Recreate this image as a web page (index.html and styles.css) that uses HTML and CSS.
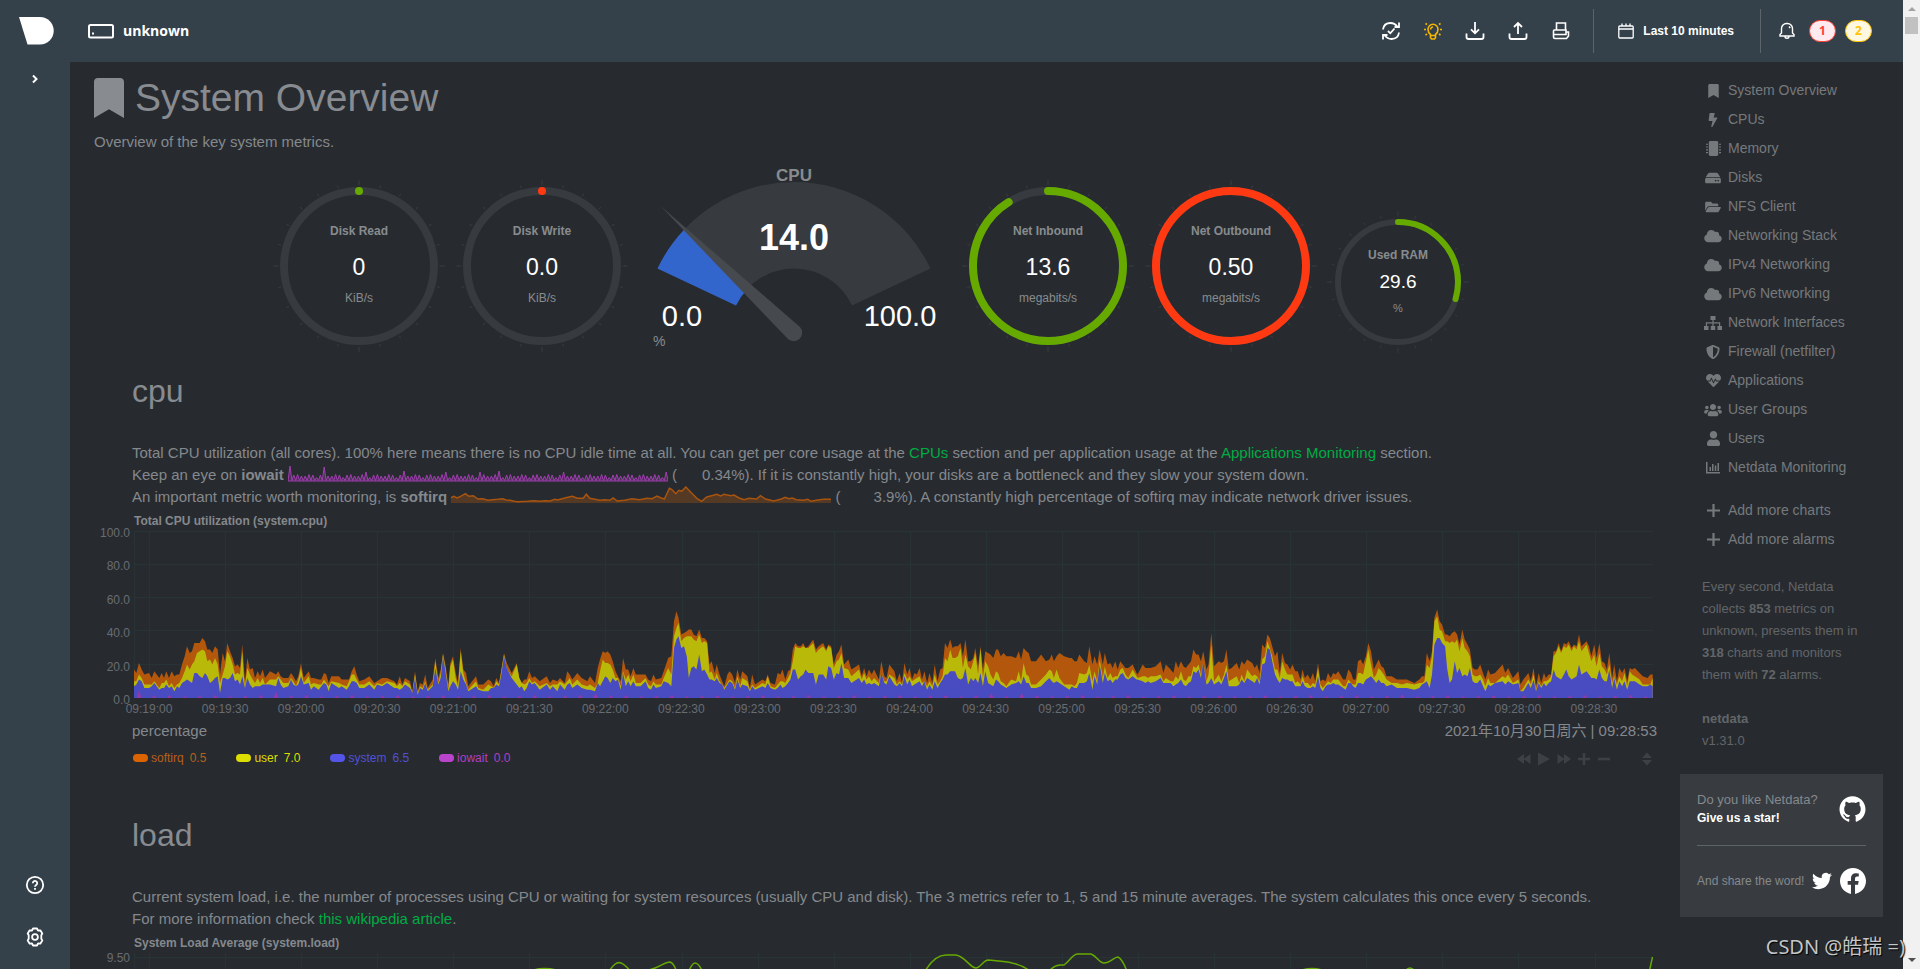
FILE: index.html
```html
<!DOCTYPE html>
<html lang="en">
<head>
<meta charset="utf-8">
<title>unknown netdata dashboard</title>
<link rel="stylesheet" href="styles.css">
</head>
<body>
<div class="app">
  <aside class="rail">
    <a class="logo" href="#" aria-label="Netdata"><svg width="35" height="28" viewBox="0 0 35 28"><path d="M0 0H21a13.500 13.500 0 0 1 0 27.500H8.500Z" fill="#fff"/></svg></a>
    <button class="icon-btn expand" aria-label="Expand"><svg width="8" height="10" viewBox="0 0 8 10" fill="none" stroke="#fff" stroke-width="2"><path d="M2 1.500 5.500 5 2 8.500"/></svg></button>
    <div class="rail-bottom">
      <button class="icon-btn" aria-label="Help"><svg width="20" height="20" viewBox="0 0 20 20" fill="none" stroke="#fff" stroke-width="1.800"><circle cx="10" cy="10" r="8.200"/><path d="M7.800 8.200a2.200 2.200 0 1 1 3.400 1.800c-.8.500-1.200.9-1.200 1.800" /><path d="M10 13v1.800"/></svg></button>
      <button class="icon-btn" aria-label="Settings"><svg width="20" height="20" viewBox="0 0 20 20" fill="none" stroke="#fff" stroke-width="1.800" stroke-linejoin="round"><path d="M8 1.500h4l1 2 2.300-.2 2 3.200-1 1.800v3.400l1 1.800-2 3.200-2.300-.2-1 2H8l-1-2-2.300.2-2-3.200 1-1.800V8.300l-1-1.800 2-3.200 2.300.2Z"/><circle cx="10" cy="10" r="2.900"/></svg></button>
    </div>
  </aside>

  <div class="page">
    <header class="topbar">
      <div class="host">
        <svg width="26" height="15" viewBox="0 0 26 15" fill="none" stroke="#fff" stroke-width="2"><rect x="1" y="1" width="24" height="12.500" rx="1.500"/><path d="M4 9.500h2"/></svg>
        <span>unknown</span>
      </div>
      <div class="tools">
        <button class="icon-btn" aria-label="Update"><svg width="20" height="20" viewBox="0 0 20 20" fill="none" stroke="#fff" stroke-width="1.800"><path d="M2 8.500C2.500 4.500 5.500 2 9.500 2c3 0 5 1.200 7 3.700M18 1.500V6h-4.500M18 11.500C17.500 15.500 14.500 18 10.500 18c-3 0-5-1.200-7-3.700M2 18.500V14h4.500M7 10l2.300 2.300L13.500 7.500"/></svg></button>
        <button class="icon-btn" aria-label="News"><svg width="18" height="20" viewBox="0 0 18 20" fill="none" stroke="#f5b800" stroke-width="1.600"><path d="M6.500 13.500C4.800 12.200 4 10.500 4 8.300a5 5 0 0 1 10 0c0 2.200-.8 3.900-2.500 5.200v3.300l-1 1.200h-3l-1-1.200ZM6.500 14.500h5M6.700 8.500A2.300 2.300 0 0 1 9 6M1.500 2.500l1.500 1M16.500 2.500l-1.500 1M0 8.500h2M16 8.500h2M1.500 14l1.500-1M16.500 14l-1.500-1"/></svg></button>
        <button class="icon-btn" aria-label="Import"><svg width="20" height="20" viewBox="0 0 20 20" fill="none" stroke="#fff" stroke-width="1.800"><path d="M10 1v11M6 8.300l4 4 4-4M1.500 12.500v3.500a2 2 0 0 0 2 2h13a2 2 0 0 0 2-2v-3.500"/></svg></button>
        <button class="icon-btn" aria-label="Export"><svg width="20" height="20" viewBox="0 0 20 20" fill="none" stroke="#fff" stroke-width="1.800"><path d="M10 13V2M6 6l4-4 4 4M1.500 12.500v3.500a2 2 0 0 0 2 2h13a2 2 0 0 0 2-2v-3.500"/></svg></button>
        <button class="icon-btn" aria-label="Print"><svg width="20" height="20" viewBox="0 0 20 20" fill="none" stroke="#fff" stroke-width="1.600"><path d="M5.500 9V2h9v7M3.500 9h11.500v4.500H2.500V10a1 1 0 0 1 1-1ZM2.500 13.500v2.500a1.500 1.500 0 0 0 1.500 1.500h11.500l2-2.500v-4h-2.500"/></svg></button>
      </div>
      <button class="range"><svg width="16" height="16" viewBox="0 0 16 16" fill="none" stroke="#fff" stroke-width="1.300"><rect x=".8" y="3" width="14.400" height="12" rx="1"/><path d="M.8 6h14.400M4 .5V3M8 .5V3M12 .5V3"/></svg><span>Last 10 minutes</span></button>
      <div class="alarms">
        <svg width="16" height="18" viewBox="0 0 16 18" fill="none" stroke="#fff" stroke-width="1.400"><path d="M1 14v-1.500l1.500-1.500V6.500a5 5 0 0 1 5-5h1a5 5 0 0 1 5 5V11l1.500 1.500V14ZM6 14.500a2 1.800 0 0 0 4 0M10 4.500l1.200 1.500"/></svg>
        <button class="badge critical">1</button>
        <button class="badge warning">2</button>
      </div>
    </header>

    <div class="body">
      <main class="main">
        <h1><svg width="30" height="40" viewBox="0 0 384 512" fill="currentColor"><path d="M0 512V48C0 21.490 21.490 0 48 0h288c26.510 0 48 21.490 48 48v464L192 400Z"/></svg><span>System Overview</span></h1>
        <p class="lead">Overview of the key system metrics.</p>

        <div class="gauges">
          <svg class="pie" width="174" height="174" viewBox="0 0 174 174" data-arc="0.01" data-color="#66aa00" data-title="Disk Read" data-value="0" data-unit="KiB/s"></svg>
          <svg class="pie" width="174" height="174" viewBox="0 0 174 174" data-arc="0.01" data-color="#ff3912" data-title="Disk Write" data-value="0.0" data-unit="KiB/s"></svg>
          <svg class="dial" width="290" height="188" viewBox="0 0 290 188">
            <path d="M7.500 103.500A151 151 0 0 1 280.500 103.500L202 140.500A64 64 0 0 0 86 140.500Z" fill="#373a3f"/>
            <path d="M7.500 103.500A151 151 0 0 1 34.300 64.500L97.500 123.900A64 64 0 0 0 86 140.500Z" fill="#3366cc"/>
            <path d="M10.500 41L150 162A8.500 8.500 0 0 1 138 174Z" fill="#464a4f"/>
            <text class="dial-title" x="144" y="16">CPU</text>
            <text class="dial-value" x="144" y="85">14.0</text>
            <text class="dial-limit" x="32" y="161">0.0</text>
            <text class="dial-limit" x="250" y="161">100.0</text>
            <text class="dial-unit" x="3" y="181">%</text>
          </svg>
          <svg class="pie" width="174" height="174" viewBox="0 0 174 174" data-arc="91.200" data-color="#66aa00" data-title="Net Inbound" data-value="13.6" data-unit="megabits/s"></svg>
          <svg class="pie" width="174" height="174" viewBox="0 0 174 174" data-arc="100" data-color="#ff3912" data-title="Net Outbound" data-value="0.50" data-unit="megabits/s"></svg>
          <svg class="pie small" width="142" height="142" viewBox="0 0 142 142" data-arc="29.600" data-color="#66aa00" data-title="Used RAM" data-value="29.6" data-unit="%"></svg>
        </div>

        <section class="block">
          <h2>cpu</h2>
          <p class="text">Total CPU utilization (all cores). 100% here means there is no CPU idle time at all. You can get per core usage at the <a href="#cpus">CPUs</a> section and per application usage at the <a href="#apps">Applications Monitoring</a> section.<br>
          Keep an eye on <b>iowait</b> <svg class="spark" id="spark-iowait" width="380" height="18" viewBox="0 0 380 18"></svg> (<span class="num">0.34</span>%). If it is constantly high, your disks are a bottleneck and they slow your system down.<br>
          An important metric worth monitoring, is <b>softirq</b> <svg class="spark" id="spark-softirq" width="380" height="18" viewBox="0 0 380 18"></svg> (<span class="num">3.9</span>%). A constantly high percentage of softirq may indicate network driver issues.</p>
          <h3>Total CPU utilization (system.cpu)</h3>
          <div class="chart">
            <div class="yaxis"><span>100.0</span><span>80.0</span><span>60.0</span><span>40.0</span><span>20.0</span><span>0.0</span></div>
            <div class="plot-col">
              <svg class="plot" id="cpu-plot" viewBox="0 0 1519 168" preserveAspectRatio="none"></svg>
              <div class="xaxis" id="cpu-x"></div>
            </div>
          </div>
          <div class="chart-foot"><span>percentage</span><span>2021年10月30日周六 | 09:28:53</span></div>
          <div class="legend-row">
            <ul class="legend">
              <li class="softirq"><i></i><span>softirq</span><span>0.5</span></li>
              <li class="user"><i></i><span>user</span><span>7.0</span></li>
              <li class="system"><i></i><span>system</span><span>6.5</span></li>
              <li class="iowait"><i></i><span>iowait</span><span>0.0</span></li>
            </ul>
            <div class="toolbox">
              <button class="icon-btn" aria-label="Back"><svg width="14" height="16" viewBox="0 0 14 16"><path d="M7 3v10L0 8ZM13.500 3v10L6.500 8Z"/></svg></button>
              <button class="icon-btn" aria-label="Play"><svg width="14" height="16" viewBox="0 0 14 16"><path d="M1 1.500 13 8 1 14.500Z"/></svg></button>
              <button class="icon-btn" aria-label="Forward"><svg width="14" height="16" viewBox="0 0 14 16"><path d="M7 3v10l7-5ZM.5 3v10l7-5Z"/></svg></button>
              <button class="icon-btn" aria-label="Zoom in"><svg width="14" height="16" viewBox="0 0 14 16"><path d="M5.700 2h2.600v4.700H13v2.600H8.300V14H5.700V9.300H1V6.700h4.700Z"/></svg></button>
              <button class="icon-btn" aria-label="Zoom out"><svg width="14" height="16" viewBox="0 0 14 16"><path d="M1 6.700h12v2.600H1Z"/></svg></button>
              <button class="icon-btn resize" aria-label="Resize"><svg width="12" height="16" viewBox="0 0 12 16"><path d="M6 1.500 11 7H1ZM6 14.500 11 9H1Z"/></svg></button>
            </div>
          </div>
        </section>

        <section class="block">
          <h2>load</h2>
          <p class="text">Current system load, i.e. the number of processes using CPU or waiting for system resources (usually CPU and disk). The 3 metrics refer to 1, 5 and 15 minute averages. The system calculates this once every 5 seconds.<br>For more information check <a href="#load">this wikipedia article</a>.</p>
          <h3>System Load Average (system.load)</h3>
          <div class="chart">
            <div class="yaxis load-axis"><span>9.50</span></div>
            <div class="plot-col"><svg class="plot" id="load-plot" viewBox="0 0 1519 168" preserveAspectRatio="none"></svg></div>
          </div>
        </section>
      </main>

      <aside class="side">
        <nav class="menu">
          <a href="#"><svg width="11" height="14" viewBox="0 0 384 512"><path d="M0 512V48C0 21.490 21.490 0 48 0h288c26.510 0 48 21.490 48 48v464L192 400Z"/></svg>System Overview</a>
          <a href="#"><svg width="10" height="14" viewBox="0 0 320 512"><path d="M296 160H180.600l42.600-129.800C227.200 15 215.700 0 200 0H56C44 0 33.800 8.900 32.200 20.800l-32 240C-1.700 275.200 9.500 288 24 288h118.700L96.600 482.500c-3.600 15.200 8 29.500 23.300 29.500 8.400 0 16.400-4.400 20.800-12l176-304c9.300-15.900-2.200-36-20.700-36z"/></svg>CPUs</a>
          <a href="#"><svg width="15" height="15" viewBox="0 0 512 512"><rect x="96" width="320" height="512" rx="48"/><path d="M0 90h70v40H0ZM0 186h70v40H0ZM0 282h70v40H0ZM0 378h70v40H0ZM442 90h70v40h-70ZM442 186h70v40h-70ZM442 282h70v40h-70ZM442 378h70v40h-70Z"/></svg>Memory</a>
          <a href="#"><svg width="16" height="14" viewBox="0 0 576 512"><path d="M576 304v96c0 26.510-21.490 48-48 48H48c-26.510 0-48-21.490-48-48v-96c0-26.510 21.490-48 48-48h480c26.510 0 48 21.490 48 48zm-48-80a79.557 79.557 0 0 1 30.777 6.165L462.250 85.374A48.003 48.003 0 0 0 422.311 64H153.689a48 48 0 0 0-39.938 21.374L17.223 230.165A79.557 79.557 0 0 1 48 224h480zm-48 96c-17.673 0-32 14.327-32 32s14.327 32 32 32 32-14.327 32-32-14.327-32-32-32zm-96 0c-17.673 0-32 14.327-32 32s14.327 32 32 32 32-14.327 32-32-14.327-32-32-32z"/></svg>Disks</a>
          <a href="#"><svg width="16" height="14" viewBox="0 0 576 512"><path d="M572.694 292.093L500.270 416.248A63.997 63.997 0 0 1 444.989 448H45.025c-18.523 0-30.064-20.093-20.731-36.093l72.424-124.155A64 64 0 0 1 152 256h399.964c18.523 0 30.064 20.093 20.730 36.093zM152 224h328v-48c0-26.510-21.490-48-48-48H272l-64-64H48C21.490 64 0 85.490 0 112v278.046l69.077-118.418C86.214 242.250 117.989 224 152 224z"/></svg>NFS Client</a>
          <a href="#"><svg width="18" height="14" viewBox="0 0 640 512"><path d="M537.600 226.600c4.100-10.700 6.400-22.400 6.400-34.600 0-53-43-96-96-96-19.700 0-38.100 6-53.300 16.200C367 64.200 315.300 32 256 32c-88.400 0-160 71.600-160 160 0 2.700.1 5.400.2 8.100C40.200 219.800 0 273.200 0 336c0 79.500 64.500 144 144 144h368c70.700 0 128-57.300 128-128 0-61.900-44-113.600-102.400-125.400z"/></svg>Networking Stack</a>
          <a href="#"><svg width="18" height="14" viewBox="0 0 640 512"><path d="M537.600 226.600c4.100-10.700 6.400-22.400 6.400-34.600 0-53-43-96-96-96-19.700 0-38.100 6-53.300 16.200C367 64.200 315.300 32 256 32c-88.400 0-160 71.600-160 160 0 2.700.1 5.400.2 8.100C40.200 219.800 0 273.200 0 336c0 79.500 64.500 144 144 144h368c70.700 0 128-57.300 128-128 0-61.900-44-113.600-102.400-125.400z"/></svg>IPv4 Networking</a>
          <a href="#"><svg width="18" height="14" viewBox="0 0 640 512"><path d="M537.600 226.600c4.100-10.700 6.400-22.400 6.400-34.600 0-53-43-96-96-96-19.700 0-38.100 6-53.300 16.200C367 64.200 315.300 32 256 32c-88.400 0-160 71.600-160 160 0 2.700.1 5.400.2 8.100C40.200 219.800 0 273.200 0 336c0 79.500 64.500 144 144 144h368c70.700 0 128-57.300 128-128 0-61.900-44-113.600-102.400-125.400z"/></svg>IPv6 Networking</a>
          <a href="#"><svg width="18" height="14" viewBox="0 0 18 14"><path d="M6.500 0h5v4h-5ZM0 10h4.500v4H0ZM6.800 10h4.400v4H6.800ZM13.500 10H18v4h-4.500ZM8.400 4h1.200v6H8.400ZM1.800 6.300h14.400V10H15V7.500H3V10H1.800Z"/></svg>Network Interfaces</a>
          <a href="#"><svg width="14" height="14" viewBox="0 0 512 512"><path d="M466.500 83.700l-192-80a48.150 48.150 0 0 0-36.900 0l-192 80C27.700 91.100 16 108.600 16 128c0 198.500 114.500 335.700 221.500 380.300 11.800 4.900 25.100 4.900 36.900 0C360.100 472.600 496 349.300 496 128c0-19.400-11.700-36.900-29.500-44.300zM256.100 446.300l-.1-381 175.900 73.300c-3.300 151.400-82.100 261.100-175.800 307.700z"/></svg>Firewall (netfilter)</a>
          <a href="#"><svg width="15" height="15" viewBox="0 0 512 512"><path d="M320.200 243.800l-49.700 99.400c-6 12.100-23.400 11.700-28.900-.6l-56.900-126.300-30 71.700H60.600l182.500 186.500c7.100 7.300 18.600 7.300 25.700 0L451.400 288H342.300l-22.100-44.200zM473.700 73.900l-2.400-2.500c-51.500-52.600-135.800-52.600-187.400 0L256 100l-27.900-28.500c-51.500-52.700-135.900-52.700-187.400 0l-2.400 2.400C-10.400 123.700-12.500 203 31 256h102.400l35.900-86.200c5.400-12.900 23.600-13.100 29.400-.4l58.200 129.300 49-97.900c5.900-11.800 22.700-11.800 28.600 0l27.600 55.200H481c43.500-53 41.400-132.300-7.300-182.100z"/></svg>Applications</a>
          <a href="#"><svg width="18" height="14" viewBox="0 0 640 512"><path d="M96 224c35.300 0 64-28.700 64-64s-28.700-64-64-64-64 28.700-64 64 28.700 64 64 64zm448 0c35.300 0 64-28.700 64-64s-28.700-64-64-64-64 28.700-64 64 28.700 64 64 64zm32 32h-64c-17.600 0-33.500 7.100-45.100 18.600 40.300 22.100 68.900 62 75.100 109.400h66c17.700 0 32-14.300 32-32v-32c0-35.300-28.700-64-64-64zm-256 0c61.900 0 112-50.100 112-112S381.900 32 320 32 208 82.100 208 144s50.100 112 112 112zm76.800 32h-8.300c-20.800 10-43.900 16-68.500 16s-47.600-6-68.500-16h-8.300C179.600 288 128 339.600 128 403.200V432c0 26.500 21.500 48 48 48h288c26.500 0 48-21.500 48-48v-28.800c0-63.600-51.600-115.200-115.200-115.200zm-223.700-13.400C161.500 263.100 145.600 256 128 256H64c-35.300 0-64 28.700-64 64v32c0 17.700 14.300 32 32 32h65.900c6.300-47.400 34.900-87.300 75.200-109.400z"/></svg>User Groups</a>
          <a href="#"><svg width="13" height="15" viewBox="0 0 448 512"><path d="M224 256c70.700 0 128-57.300 128-128S294.700 0 224 0 96 57.300 96 128s57.300 128 128 128zm89.600 32h-16.700c-22.200 10.200-46.900 16-72.900 16s-50.600-5.800-72.900-16h-16.700C60.200 288 0 348.200 0 422.400V464c0 26.500 21.500 48 48 48h352c26.500 0 48-21.500 48-48v-41.600c0-74.200-60.200-134.400-134.400-134.400z"/></svg>Users</a>
          <a href="#"><svg width="14" height="12" viewBox="0 0 14 12"><path d="M0 0h1.500v10H14v1.500H0ZM3.500 5H5v4H3.500ZM6 2h1.500v7H6ZM8.800 3.500h1.500V9H8.800ZM11.500 1H13v8h-1.500Z"/></svg>Netdata Monitoring</a>
          <a class="split" href="#"><svg width="13" height="13" viewBox="0 0 13 13"><path d="M5.400 0h2.200v5.400H13v2.200H7.600V13H5.400V7.600H0V5.400h5.400Z"/></svg>Add more charts</a>
          <a href="#"><svg width="13" height="13" viewBox="0 0 13 13"><path d="M5.400 0h2.200v5.400H13v2.200H7.600V13H5.400V7.600H0V5.400h5.400Z"/></svg>Add more alarms</a>
        </nav>
        <p class="info">Every second, Netdata collects <b>853</b> metrics on unknown, presents them in <b>318</b> charts and monitors them with <b>72</b> alarms.</p>
        <p class="info version"><b>netdata</b><br>v1.31.0</p>
        <div class="card">
          <a class="star" href="#"><span>Do you like Netdata?<b>Give us a star!</b></span>
            <svg width="27" height="26" viewBox="0 0 24 24"><path d="M12 .297c-6.630 0-12 5.373-12 12 0 5.303 3.438 9.800 8.205 11.385.6.113.82-.258.82-.577 0-.285-.01-1.040-.015-2.040-3.338.724-4.042-1.610-4.042-1.610C4.422 18.070 3.633 17.700 3.633 17.700c-1.087-.744.084-.729.084-.729 1.205.084 1.838 1.236 1.838 1.236 1.070 1.835 2.809 1.305 3.495.998.108-.776.417-1.305.76-1.605-2.665-.3-5.466-1.332-5.466-5.930 0-1.310.465-2.380 1.235-3.220-.135-.303-.54-1.523.105-3.176 0 0 1.005-.322 3.300 1.230.96-.267 1.980-.399 3-.405 1.020.006 2.040.138 3 .405 2.280-1.552 3.285-1.230 3.285-1.230.645 1.653.24 2.873.12 3.176.765.84 1.230 1.910 1.230 3.220 0 4.610-2.805 5.625-5.475 5.920.42.36.81 1.096.81 2.220 0 1.606-.015 2.896-.015 3.286 0 .315.21.69.825.57C20.565 22.092 24 17.592 24 12.297c0-6.627-5.373-12-12-12"/></svg></a>
          <div class="share"><span>And share the word!</span>
            <a href="#" aria-label="Twitter"><svg width="20" height="20" viewBox="0 0 24 24"><path d="M23.953 4.570a10 10 0 01-2.825.775 4.958 4.958 0 002.163-2.723c-.951.555-2.005.959-3.127 1.184a4.920 4.920 0 00-8.384 4.482C7.690 8.095 4.067 6.130 1.640 3.162a4.822 4.822 0 00-.666 2.475c0 1.710.87 3.213 2.188 4.096a4.904 4.904 0 01-2.228-.616v.06a4.923 4.923 0 003.946 4.827 4.996 4.996 0 01-2.212.085 4.936 4.936 0 004.604 3.417 9.867 9.867 0 01-6.102 2.105c-.39 0-.779-.023-1.170-.067a13.995 13.995 0 007.557 2.209c9.053 0 13.998-7.496 13.998-13.985 0-.21 0-.42-.015-.63A9.935 9.935 0 0024 4.590z"/></svg></a>
            <a href="#" aria-label="Facebook"><svg width="26" height="26" viewBox="0 0 24 24"><path d="M24 12.073c0-6.627-5.373-12-12-12s-12 5.373-12 12c0 5.990 4.388 10.954 10.125 11.854v-8.385H7.078v-3.470h3.047V9.430c0-3.007 1.792-4.669 4.533-4.669 1.312 0 2.686.235 2.686.235v2.953H15.830c-1.491 0-1.956.925-1.956 1.874v2.250h3.328l-.532 3.470h-2.796v8.385C19.612 23.027 24 18.062 24 12.073z"/></svg></a>
          </div>
        </div>
      </aside>
    </div>
  </div>

  <div class="scrollbar">
    <svg width="8" height="4" viewBox="0 0 8 4"><path d="M0 4 4 0l4 4Z" fill="#a3a3a3"/></svg>
    <div class="thumb"></div>
    <svg class="down" width="8" height="4" viewBox="0 0 8 4"><path d="M0 0h8L4 4Z" fill="#505050"/></svg>
  </div>
  <div class="watermark">CSDN @皓瑞 =)</div>
</div>
<script src="charts.js"></script>
</body>
</html>
```
FILE: styles.css
```css
* { box-sizing: border-box; }
body { margin: 0; background: #272b30; color: #85888c; font: 15px/22px "Liberation Sans", "Noto Sans CJK SC", sans-serif; }
h1, h2, h3, p, ul { margin: 0; padding: 0; font-weight: normal; }
ul { list-style: none; }
a { color: #00ab44; text-decoration: none; }
svg { display: block; flex: none; }
button { font: inherit; color: inherit; background: none; border: 0; padding: 0; }
.icon-btn { display: flex; align-items: center; justify-content: center; }

.app { position: relative; display: flex; height: 100vh; overflow: hidden; }

/* left rail */
.rail { flex: none; width: 70px; display: flex; flex-direction: column; align-items: center; padding: 17px 0 22px; background: #35414a; }
.logo { margin-left: 2px; }
.expand { margin-top: 29px; }
.rail-bottom { margin-top: auto; display: flex; flex-direction: column; gap: 32px; }

/* top bar */
.page { flex: 1; min-width: 0; display: flex; flex-direction: column; }
.topbar { flex: none; height: 62px; display: flex; align-items: center; padding: 0 31px 0 18px; background: #35414a; color: #fff; }
.host { display: flex; align-items: center; gap: 9px; margin-right: auto; font: bold 14px/20px "Open Sans", sans-serif; }
.tools { display: flex; gap: 23px; padding-right: 22px; }
.range { display: flex; align-items: center; gap: 9px; height: 44px; padding: 0 26px 0 24px; border: solid #5b6469; border-width: 0 1px; font: bold 12px/16px "Liberation Sans", sans-serif; }
.alarms { display: flex; align-items: center; gap: 9px; padding-left: 18px; }
.alarms svg { margin-right: 5px; }
.badge { width: 27px; height: 22px; border: 1px solid; border-radius: 11px; font: bold 12px/18px "Open Sans", sans-serif; text-align: center; }
.critical { color: #ff4136; background: #ffebef; }
.warning { color: #ffc300; background: #fff8e1; }

/* content */
.body { flex: 1; min-height: 0; display: flex; overflow: hidden; }
.main { flex: 1; min-width: 0; padding: 14px 0 0 24px; }
h1 { display: flex; align-items: center; gap: 11px; font-size: 39px; line-height: 43px; color: #888b90; }
.lead { margin-top: 12px; }
.gauges { display: flex; justify-content: center; align-items: flex-end; gap: 9px; margin-top: 12px; padding-right: 11px; }
.dial { margin: 0 12px; }
text { text-anchor: middle; fill: #888b8e; font-size: 12px; }
.pie-title { font-weight: bold; }
.pie-value { font-size: 23px; fill: #fff; }
.small .pie-value { font-size: 19px; }
.small .pie-unit { font-size: 11px; }
.dial-title { font-size: 17px; font-weight: bold; }
.dial-value { font-size: 36px; font-weight: bold; fill: #fff; }
.dial-limit { font-size: 29px; fill: #fff; }
.dial-unit { font-size: 14px; text-anchor: start; }

.block { margin-top: 20px; }
.block + .block { margin-top: 50px; }
h2 { padding-left: 38px; font-size: 32px; line-height: 36px; color: #888b90; }
.text { margin: 33px 0 7px; padding-left: 38px; }
.spark { display: inline-block; height: 18px; margin-bottom: -2px; vertical-align: baseline; }
.num { display: inline-block; width: 54px; text-align: right; }
h3 { padding-left: 40px; font-size: 12px; font-weight: bold; line-height: 12px; }
.chart { display: flex; padding-right: 4px; }
.yaxis { flex: none; width: 40px; height: 179px; display: flex; flex-direction: column; justify-content: space-between; padding-right: 4px; text-align: right; }
.load-axis { padding-top: 3px; }
.yaxis, .xaxis { font-size: 12px; line-height: 12px; color: #696c70; }
.plot-col { flex: 1; min-width: 0; padding-top: 4px; }
.plot { width: 100%; height: 168px; }
.xaxis { display: flex; width: calc(100% + 2px); margin: 3px 0 0 -23px; line-height: 14px; }
.xaxis span { flex: 1 0 5%; text-align: center; }
.chart-foot { display: flex; justify-content: space-between; margin-top: 5px; padding-left: 38px; line-height: 20px; }
.legend-row { display: flex; justify-content: space-between; margin-top: 7px; padding: 0 4px 0 39px; }
.legend { display: flex; gap: 30px; font-size: 12px; line-height: 16px; }
.legend li { display: flex; align-items: center; gap: 6px; }
.legend i { width: 15px; height: 8px; margin-right: -3px; border-radius: 4px; }
.softirq { color: #b8601a; }
.softirq i { background: #dc6400; }
.user { color: #dddd00; }
.user i { background: #dddd00; }
.system { color: #5050d8; }
.system i { background: #5454e8; }
.iowait { color: #b03fc0; }
.iowait i { background: #bb44cc; }
.toolbox { display: flex; gap: 6px; margin-top: 3px; fill: #3d4146; }
.resize { margin-left: 24px; }

/* right column */
.side { flex: none; width: 246px; padding: 14px 20px 0 23px; }
.menu { display: flex; flex-direction: column; padding-left: 22px; font-size: 14px; line-height: 29px; }
.menu a { display: grid; grid-template-columns: 22px 1fr; gap: 4px; align-items: center; color: #76797b; }
.menu svg { justify-self: center; fill: #76797b; }
.menu .split { margin-top: 14px; }
.info { margin-top: 22px; padding: 0 10px 0 22px; font-size: 13px; color: #626568; }
.card { margin-top: 22px; padding: 17px 17px 23px; background: #383c41; font-size: 13px; line-height: 18px; }
.card svg { fill: #fff; }
.card b { display: block; color: #fff; font-size: 12px; }
.star { display: flex; justify-content: space-between; align-items: center; padding-bottom: 18px; border-bottom: 1px solid #5b6469; color: #85888c; }
.share { display: flex; align-items: center; justify-content: space-between; margin-top: 22px; font-size: 12px; }

/* window scrollbar */
.scrollbar { flex: none; width: 17px; display: flex; flex-direction: column; align-items: center; padding: 7px 0; background: #f1f1f1; }
.thumb { width: 13px; height: 17px; margin-top: 6px; background: #c1c1c1; }
.down { margin-top: auto; }

.watermark { position: absolute; right: 15px; bottom: 9px; font: 20px/26px "Noto Sans", "Noto Sans CJK SC", sans-serif; color: #c4c5c6; text-shadow: 1px 1px 1px #000; }
```
FILE: charts.js
```js
const el = id => document.getElementById(id);

/* round gauges */
document.querySelectorAll('.pie').forEach(svg => {
  const d = svg.dataset, small = svg.classList.contains('small');
  const c = small ? 71 : 87, r = small ? 60 : 75, w = small ? 6 : 8;
  const y = small ? [48, 77, 101] : [56, 96, 123];
  svg.innerHTML = `
    <g fill="none" stroke="#373a3f">
      <circle cx="${c}" cy="${c}" r="${r + 7}" stroke-width="3" pathLength="240" stroke-dasharray="0.5 9.5" stroke-dashoffset="0.25"/>
      <circle cx="${c}" cy="${c}" r="${r + 9}" stroke-width="4" pathLength="240" stroke-dasharray="0.5 59.5" stroke-dashoffset="0.25"/>
      <circle cx="${c}" cy="${c}" r="${r}" stroke-width="${w}"/>
      <circle cx="${c}" cy="${c}" r="${r}" stroke="${d.color}" stroke-width="${w}" stroke-linecap="round" pathLength="100" stroke-dasharray="${d.arc} 100" transform="rotate(-90 ${c} ${c})"/>
    </g>
    <text class="pie-title" x="${c}" y="${y[0]}">${d.title}</text>
    <text class="pie-value" x="${c}" y="${y[1]}">${d.value}</text>
    <text class="pie-unit" x="${c}" y="${y[2]}">${d.unit}</text>`;
});

/* stacked samples: offset, softirq top, user top, system top */
const groups = [
  { x0: -44, k: 3, v: [132,17,10,7,139,15,10,8,147,21,14,11,155,17,12,10,163,14,8,6,177,15,8,6,185,12,8,7,193,16,10,9,208,12,6,5,215,15,9,6,222,12,9,6,229,16,11,8,237,12,7,6,245,16,9,7,253,13,6,4,261,14,8,7,268,14,9,6,276,20,12,9,284,25,16,10,291,31,20,11,299,27,17,10,306,28,20,9,313,33,22,15,321,33,27,15,329,33,28,13,337,36,29,12,345,34,28,15,352,29,22,13,360,29,23,9,367,27,20,10,375,31,24,12,383,29,20,13,390,14,9,3,398,27,14,12,405,22,19,12,412,33,28,11,420,28,25,12,428,24,20,15,435,19,14,10,443,20,15,11,450,18,14,8,457,32,28,13,461,20,14,9,465,10,7,6,472,24,18,12,480,17,14,8,488,18,11,6,495,12,9,7,503,16,12,7,510,13,9,7,518,17,12,8,525,12,8,8,540,16,11,8,558,14,11,7,565,16,13,12,572,13,11,8,580,12,9,6,595,12,9,7,603,15,12,11,610,13,10,8,618,10,7,7,625,13,11,8,633,21,18,13,641,12,9,8,656,16,13,9,663,12,8,5,671,12,9,7,686,11,8,5,694,11,8,7,702,15,11,9,709,14,9,8,716,9,7,4,724,13,10,9,747,13,9,6,755,11,8,7,770,11,7,5,777,11,10,7,785,16,14,10,793,19,14,10,800,14,11,9,808,10,8,6,823,11,8,6,838,13,10,8,853,9,7,5,861,10,9,8,876,12,8,7,891,12,10,9,913,10,9,6,921,8,7,6,929,13,9,5,937,8,7,6,945,12,10,8,960,10,8,6,967,4,3,3,975,16,14,12,983,4,3,2,990,9,7,6,998,8,6,5,1006,14,10,9,1013,6,5,4,1028,11,8,7,1036,24,22,18,1045,12,9,8,1052,17,15,12,1059,27,26,25,1067,19,17,15,1075,8,5,4,1081,21,19,7,1089,25,23,10,1097,15,12,8,1104,9,7,5,1112,30,28,16,1120,17,15,11,1128,15,9,8,1135,7,5,4,1158,13,10,7,1165,8,6,5,1180,8,5,4,1195,11,8,4,1203,10,7,6,1211,7,6,6,1219,12,10,8,1227,9,8,7,1234,17,16,14,1242,27,26,25,1250,21,18,18,1265,15,13,12,1280,21,20,8,1288,12,12,6,1295,9,9,7,1303,11,8,4,1310,11,9,6,1318,16,12,10,1326,12,9,8,1334,13,10,9,1349,10,7,5,1370,13,9,8,1380,9,7,5,1388,11,8,7,1402,10,8,4,1410,12,10,8,1424,9,8,5,1432,16,10,8,1439,14,12,9,1447,11,8,6,1462,15,11,8,1475,12,8,6,1492,10,7,5,1500,13,8,5,1515,9,6,4,1523,18,9,9,1530,23,16,7,1538,28,23,10,1546,27,21,13] },
  { x0: 466, k: 2.904, v: [22,28,21,12,30,26,20,9,37,22,17,12,45,16,12,10,52,13,12,11,60,10,7,5,67,24,16,15,75,17,11,7,82,17,14,10,89,13,10,7,97,18,14,10,104,14,9,7,118,14,9,7,132,14,12,10,140,11,8,6,148,10,7,5,155,14,10,8,162,11,8,6,178,12,8,7,185,16,12,10,198,24,18,9,207,25,14,7,215,46,37,30,222,52,42,35,228,48,45,37,236,38,34,30,244,39,36,31,252,40,37,25,258,41,37,12,265,41,37,18,272,38,35,19,280,37,34,17,288,41,38,26,296,36,33,16,303,36,34,17,311,34,33,14,318,20,15,11,324,22,16,11,333,15,11,10,339,20,15,12,347,14,10,9,355,10,8,8,361,7,6,5,370,14,9,8,376,16,11,10,384,14,10,9,392,9,6,5,399,17,13,11,407,11,7,6,413,16,12,8,428,13,10,7,435,6,5,4,442,14,8,7,450,8,6,5,472,11,9,7,480,10,8,6,487,14,13,9,495,9,7,6,508,8,6,5,516,15,8,6,524,14,10,8,530,17,10,6,538,11,9,7,546,16,12,9,553,17,15,11,560,29,22,17,567,33,31,17,575,31,30,11,583,31,30,13,590,33,31,14,597,30,30,17,605,31,30,15,619,35,33,15,627,29,27,8,635,31,29,14,648,33,31,14,657,29,28,11,663,32,31,19,671,31,30,18,679,20,18,11,687,26,22,15,694,28,23,14,701,32,27,21,709,20,18,12,721,23,17,12,730,17,13,9,752,20,17,12,760,13,11,9,767,18,15,11,774,13,11,8,781,17,13,9,789,14,10,8,796,17,12,9,810,11,9,7,817,22,15,15,826,13,10,9,832,12,10,8,840,20,14,13,855,16,12,8,862,10,8,7,870,15,10,9,877,9,8,7,884,21,15,13,892,14,11,8,899,18,13,11,906,11,10,7,913,15,11,8,920,14,12,9,928,18,13,10,935,11,9,7,942,16,10,10,950,9,7,5,957,15,10,8,965,9,7,5,972,20,14,10,980,10,8,6,988,17,10,9,995,18,13,11,1002,33,24,14,1009,30,22,14,1017,35,29,16,1024,30,24,16,1031,31,24,16,1039,31,25,12,1047,33,30,11,1054,25,18,12,1061,35,26,18,1069,22,19,8,1077,22,17,12,1084,24,22,10,1090,30,27,12,1098,19,14,9,1105,31,30,15,1112,17,12,7,1119,28,22,16,1127,27,19,9,1134,26,14,8,1142,24,11,7,1150,29,16,11,1156,29,15,10,1164,25,10,8,1172,27,9,7,1180,25,7,6,1194,25,11,8,1208,24,10,9,1216,28,16,10,1223,23,10,8,1230,30,21,13,1238,28,14,9,1245,27,13,9,1252,22,8,6,1266,22,8,6,1281,26,11,7,1295,22,14,10,1305,23,17,12,1312,26,16,10,1318,22,12,9,1326,25,17,10,1334,27,12,9,1348,25,8,7,1363,24,8,5,1370,24,8,7,1378,22,7,6,1385,22,9,6,1392,26,15,9,1406,22,14,9,1414,21,15,10,1421,31,20,15,1430,20,10,5,1436,25,16,13,1444,20,10,8,1451,29,23,20,1460,20,12,9,1466,27,19,15,1474,20,12,10,1482,21,15,11,1489,18,12,9,1496,22,13,11,1503,17,13,11,1511,22,17,14,1518,20,18,15,1526,18,14,12,1534,18,12,11,1547,20,17,13,1558,15,13,11] },
  { x0: 996, k: 2.904, v: [22,14,12,11,37,20,13,10,45,18,13,9,52,18,12,10,60,18,13,9,75,19,13,10,89,22,14,12,97,15,10,9,104,20,12,9,118,17,10,9,126,15,10,7,133,22,13,8,140,18,11,9,148,22,16,11,155,19,11,8,162,18,10,7,170,20,13,9,177,22,13,10,184,29,19,16,192,26,18,15,199,26,20,17,206,22,14,12,213,28,22,22,222,17,10,8,228,20,14,9,236,39,32,12,244,19,10,8,258,22,14,10,265,21,10,8,273,22,14,12,280,29,20,16,287,17,10,7,295,18,11,7,310,21,13,7,317,17,9,8,324,22,14,11,332,20,10,9,340,23,17,12,355,21,13,10,362,18,14,9,369,20,13,12,376,15,10,8,384,32,23,20,392,30,25,21,399,38,34,30,406,36,30,29,413,31,25,22,421,25,17,14,428,28,17,11,435,15,12,9,442,27,22,12,450,21,17,11,457,20,14,11,465,17,14,10,472,20,14,10,480,16,9,7,487,16,10,7,495,11,8,7,501,17,13,10,508,12,9,7,516,14,9,6,524,11,7,6,531,15,9,7,538,10,8,6,546,21,18,13,553,10,8,6,560,11,6,4,568,10,8,7,575,15,10,8,583,12,9,8,590,15,11,9,597,14,11,8,605,16,11,8,619,11,7,6,626,11,7,5,634,17,11,9,642,15,9,9,648,11,8,7,655,11,8,6,662,22,15,9,670,23,15,9,677,20,14,8,685,25,22,11,692,33,29,12,700,28,20,13,708,17,12,11,715,20,14,9,722,23,18,11,730,19,16,9,737,18,14,9,745,13,11,7,760,13,9,8,775,11,9,6,790,11,8,6,804,11,9,6,826,9,8,5,840,11,9,6,848,13,9,8,855,13,10,9,862,27,20,10,870,22,18,6,877,28,25,14,884,48,46,32,892,53,49,36,899,46,41,36,906,44,40,33,915,38,34,31,921,38,34,18,928,37,33,9,935,39,34,11,943,40,33,22,950,38,35,15,957,32,28,18,965,41,36,13,972,35,30,14,980,32,28,13,987,29,25,18,995,18,14,10,1002,17,13,9,1009,17,13,9,1017,20,14,11,1025,15,11,7,1032,11,7,4,1040,17,12,8,1047,14,9,7,1060,15,9,9,1082,20,13,10,1090,15,12,8,1098,18,14,10,1112,12,9,8,1128,16,11,9,1134,8,4,4,1142,11,6,4,1157,15,11,9,1164,10,8,6,1172,18,14,11,1179,7,5,4,1187,15,10,9,1194,9,7,6,1202,15,10,9,1208,12,10,7,1216,14,11,9,1223,14,13,10,1230,28,25,17,1237,28,27,13,1245,33,31,12,1252,28,27,11,1260,33,31,14,1267,32,30,17,1274,34,32,13,1282,30,28,11,1289,32,31,12,1297,31,29,13,1304,38,34,20,1311,31,28,14,1326,34,32,16,1333,31,27,14,1340,25,22,12,1348,32,26,12,1355,24,19,11,1363,33,27,17,1370,22,19,12,1378,21,17,10,1385,17,14,10,1392,27,20,17,1400,12,9,6,1406,20,13,12,1414,10,8,5,1421,18,13,10,1429,15,10,7,1436,18,15,10,1444,10,7,5,1451,18,16,10,1458,17,14,10,1466,18,13,10,1480,15,11,8,1489,13,8,7,1503,12,8,7,1511,14,8,8,1518,14,12,7] }
];
const rows = [];
groups.forEach(g => {
  for (let i = 0; i < g.v.length; i += 4)
    rows.push([g.x0 + g.v[i] / g.k, g.v[i + 1], g.v[i + 2], g.v[i + 3]]);
});
const H = 167;
const Y = p => (H - p * H / 100).toFixed(1);
const area = n => `M0 ${H}` + rows.map(r => `L${r[0].toFixed(1)} ${Y(r[n])}`).join('') + `V${H}Z`;

const vlines = h => {
  let s = 'M.5 0V' + h;
  for (let i = 0; i < 20; i++) s += `M${Math.floor(15.5 + i * 76.08) + 0.5} 0V${h}`;
  return s;
};
let grid = vlines(H);
for (let i = 0; i < 6; i++) grid += `M0 ${Math.floor(i * 33.3) + 0.5}H1519`;

let wait = '';
for (let i = 0; i < 100; i++) {
  const x = 5 + i * 15.22;
  const p = { 0: 5, 9: 4, 30: 3, 56: 3, 58: 3 }[i] || 1 + (i * 7 % 3) / 2;
  wait += `M${(x - 2.5).toFixed(1)} ${H}L${x.toFixed(1)} ${Y(p)}L${(x + 2.5).toFixed(1)} ${H}Z`;
}
el('cpu-plot').innerHTML = `
  <path d="${grid}" fill="none" stroke="#283336"/>
  <path d="${area(1)}" fill="#b2570b"/>
  <path d="${area(2)}" fill="#b9b90a"/>
  <path d="${area(3)}" fill="#494bc1"/>
  <path d="${wait}" fill="#8f3aa8"/>`;

el('cpu-x').innerHTML = Array.from({ length: 20 }, (_, i) =>
  `<span>09:${19 + (i >> 1)}:${i % 2 ? '30' : '00'}</span>`).join('');

/* load chart */
el('load-plot').innerHTML = `
  <path d="${vlines(H)}M0 4.500H1519" fill="none" stroke="#283336"/>
  <path fill="none" stroke="#66aa00" stroke-width="1.500" d="M396 20C400 14 420 14 428 20
    M474 20Q480 10 485 9.500Q490 10 498 20M514 17C524 16 530 9 536 9Q540 10 543 20M554 20Q558 10 561 10Q565 10 569 20
    M790 20Q800 2 812 2L822 2C832 4 836 15 842 15C846 15 850 7 854 7C862 8 870 8 878 10Q888 12 896 18
    M914 20Q918 13 926 12L930 12C936 8 938 1 944 1L957 1C963 3 965 10 970 10C976 10 980 4 984 4Q989 6 995 24
    M1168 17Q1178 14 1188 17M1270 20Q1276 10 1282 20M1515 20L1518.500 4"/>`;

/* inline sparklines */
let io = 'M0 17';
for (let i = 0; i < 100; i++) {
  const x = 2 + i * 3.800;
  const h = { 0: 15, 9: 14, 20: 9, 30: 10, 41: 9, 50: 9, 55: 10, 72: 9, 99: 9 }[i] || 3.500 + (i * i * 5 % 7) * 0.5;
  io += `L${x.toFixed(1)} ${17 - h}L${Math.min(380, x + 1.900).toFixed(1)} 16.500`;
}
el('spark-iowait').innerHTML = `<path d="${io}V17Z" fill="#bb44cc" fill-opacity=".25" stroke="#a23db2" stroke-width="1"/>`;

const soft = [746,16,752,20,758,15,765,20,775,28,782,20,791,22,800,12,810,13,820,8,830,10,840,11,850,13,857,9,865,8,873,5,880,4,900,5,912,7,925,5,935,7,945,6,955,11,960,9,975,15,983,18,990,20,1000,14,1012,14,1018,26,1025,14,1035,11,1045,8,1055,10,1065,8,1072,15,1080,6,1095,8,1110,13,1125,10,1140,14,1150,13,1160,21,1167,16,1175,12,1185,44,1190,40,1198,28,1204,38,1210,35,1218,48,1228,32,1240,14,1250,5,1260,18,1270,22,1280,26,1288,21,1295,26,1308,22,1315,24,1324,16,1335,10,1345,14,1360,12,1368,22,1378,12,1395,6,1410,12,1418,17,1425,13,1432,15,1440,10,1455,8,1463,11,1470,5,1480,8,1495,11,1510,11];
let line = '';
for (let i = 0; i < soft.length; i += 2)
  line += `${i ? 'L' : 'M'}${((soft[i] - 746) / 2.010).toFixed(1)} ${(17 - soft[i + 1] / 3).toFixed(1)}`;
el('spark-softirq').innerHTML = `
  <path d="${line}V17H0Z" fill="#dc6400" fill-opacity=".25"/>
  <path d="${line}" fill="none" stroke="#a8540f" stroke-width="1.500"/>`;
```
